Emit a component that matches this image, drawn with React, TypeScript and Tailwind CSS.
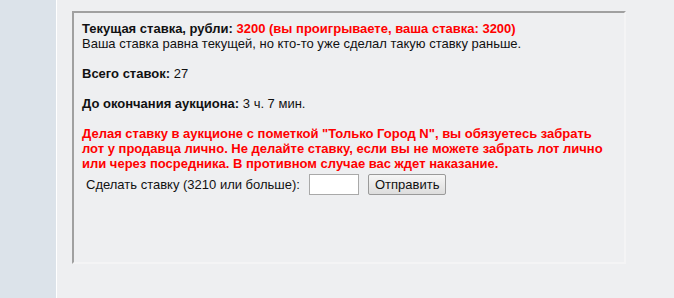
export default function App() {
  return (
    <div className="flex h-[298px] w-[674px] overflow-hidden bg-[#eeeff1] font-['Liberation_Sans',Arial,sans-serif] text-[13px] leading-[15px] text-[#111]">
      <div className="w-[57px] shrink-0 border-r border-white bg-[#dce3ea]" />
      <div className="pl-[15px] pt-[11px]">
        <div className="h-[253px] w-[554px] border-2 border-t-[#a0a0a0] border-l-[#a0a0a0] border-r-[#f4f4f5] border-b-[#f4f4f5] bg-[#eeeff1] pl-[8px] pr-[8px] pt-[8px]">
          <p>
            <b>Текущая ставка, рубли: </b>
            <b className="font-bold text-[#ff0000]">3200 (вы проигрываете, ваша ставка: 3200)</b>
          </p>
          <p>Ваша ставка равна текущей, но кто-то уже сделал такую ставку раньше.</p>
          <p className="mt-[15px]">
            <b>Всего ставок:</b> 27
          </p>
          <p className="mt-[15px]">
            <b>До окончания аукциона:</b> 3 ч. 7 мин.
          </p>
          <p className="mt-[15px] font-bold text-[#ff0000]">
            Делая ставку в аукционе с пометкой "Только Город N", вы обязуетесь забрать
            <br />
            лот у продавца лично. Не делайте ставку, если вы не можете забрать лот лично
            <br />
            или через посредника. В противном случае вас ждет наказание.
          </p>
          <div className="mt-[3px] flex items-center pl-[4px]">
            <span>Сделать ставку (3210 или больше):</span>
            <input
              type="text"
              className="ml-[9px] h-[21px] w-[50px] border border-[#a9a9a9] bg-white"
            />
            <button className="ml-[9px] h-[21px] rounded-[2px] border border-[#9a9a9a] bg-gradient-to-b from-[#f6f6f6] to-[#dddddd] px-[6px] text-[13px] leading-[15px] text-[#111]">
              Отправить
            </button>
          </div>
        </div>
      </div>
    </div>
  )
}
